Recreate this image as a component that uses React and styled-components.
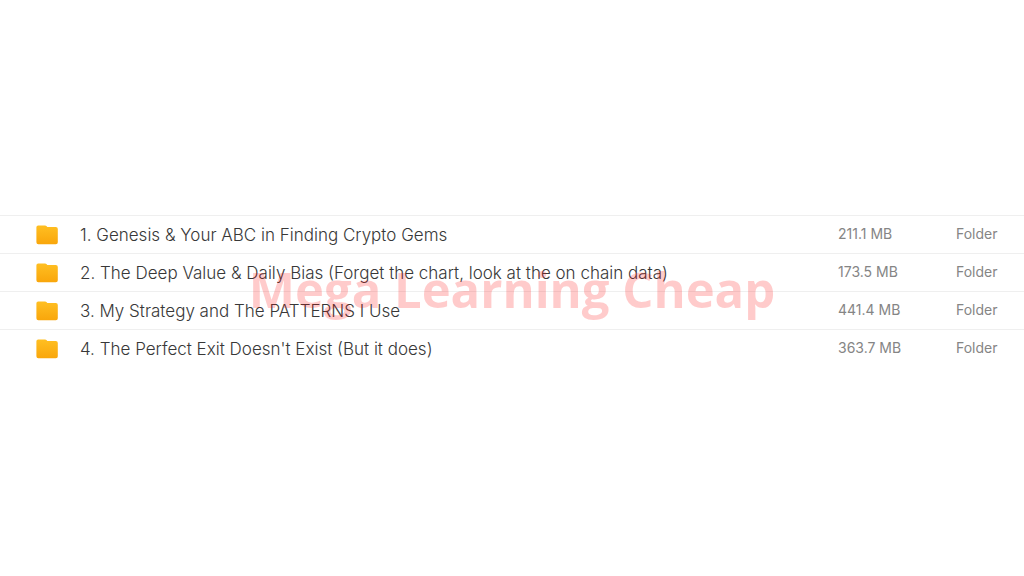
import React from 'react';
import styled, { createGlobalStyle } from 'styled-components';

const GlobalStyle = createGlobalStyle`
    body {
        margin: 0;
        background-color: #ffffff;
        font-family: Inter, 'Liberation Sans', sans-serif;
    }
`;
const Page = styled.main`
    padding: 215px 0 40px;
`;
const FileListContainer = styled.section`
    position: relative;
`;
const FileTable = styled.table`
    width: 100%;
    table-layout: fixed;
    border-collapse: separate;
    border-spacing: 0;
`;
const FileRow = styled.tr`
    height: 38px;
`;
const Cell = styled.td`
    box-sizing: border-box;
    width: ${(props) => props.$width || 'auto'};
    padding: 0;
    border-top: 1px solid #efefef;
    white-space: nowrap;
    vertical-align: middle;
`;
const IconCell = styled(Cell)`
    padding-left: 36px;
`;
const NameCell = styled(Cell)`
    overflow: hidden;
    color: #383838;
    font-size: 17px;
    font-weight: 350;
    line-height: 20px;
    text-overflow: ellipsis;
`;
const InfoCell = styled(Cell)`
    padding-bottom: 1px;
    color: #858585;
    font-size: 14px;
    line-height: 20px;
`;
const FolderSvg = styled.svg`
    display: block;
    width: 22px;
    height: 20px;
`;
const Watermark = styled.p`
    position: absolute;
    inset: 0;
    display: flex;
    align-items: center;
    justify-content: center;
    margin: 0;
    padding-bottom: 4px;
    color: rgba(255, 20, 20, 0.22);
    font-family: 'Open Sans', 'Noto Sans', sans-serif;
    font-size: 49px;
    font-weight: 700;
    line-height: 56px;
    white-space: nowrap;
    pointer-events: none;
`;

const files = [
    { name: '1. Genesis & Your ABC in Finding Crypto Gems', size: '211.1 MB' },
    { name: '2. The Deep Value & Daily Bias (Forget the chart, look at the on chain data)', size: '173.5 MB' },
    { name: '3. My Strategy and The PATTERNS I Use', size: '441.4 MB' },
    { name: "4. The Perfect Exit Doesn't Exist (But it does)", size: '363.7 MB' },
];

const FolderIcon = () => (
    <FolderSvg viewBox="0 0 22 20" aria-hidden="true">
        <defs>
            <linearGradient id="folderFill" x1="0" y1="0" x2="0" y2="1">
                <stop offset="0" stopColor="#ffbf22" />
                <stop offset="1" stopColor="#f9a60b" />
            </linearGradient>
        </defs>
        <path
            fill="url(#folderFill)"
            d="M2.2 .5H9Q10 .5 10.7 1.3L11.3 2H19.8Q21.8 2 21.8 4V17.2Q21.8 19.2 19.8 19.2H2.4Q.4 19.2 .4 17.2V2.3Q.4 .5 2.2 .5Z"
        />
    </FolderSvg>
);

const App = () => {
    return (
        <Page>
            <GlobalStyle />
            <FileListContainer>
                <FileTable aria-label="Files">
                    <tbody>
                        {files.map((file) => (
                            <FileRow key={file.name}>
                                <IconCell $width="80px">
                                    <FolderIcon />
                                </IconCell>
                                <NameCell>{file.name}</NameCell>
                                <InfoCell $width="118px">{file.size}</InfoCell>
                                <InfoCell $width="68px">Folder</InfoCell>
                            </FileRow>
                        ))}
                    </tbody>
                </FileTable>
                <Watermark>Mega Learning Cheap</Watermark>
            </FileListContainer>
        </Page>
    );
};

export default App;
